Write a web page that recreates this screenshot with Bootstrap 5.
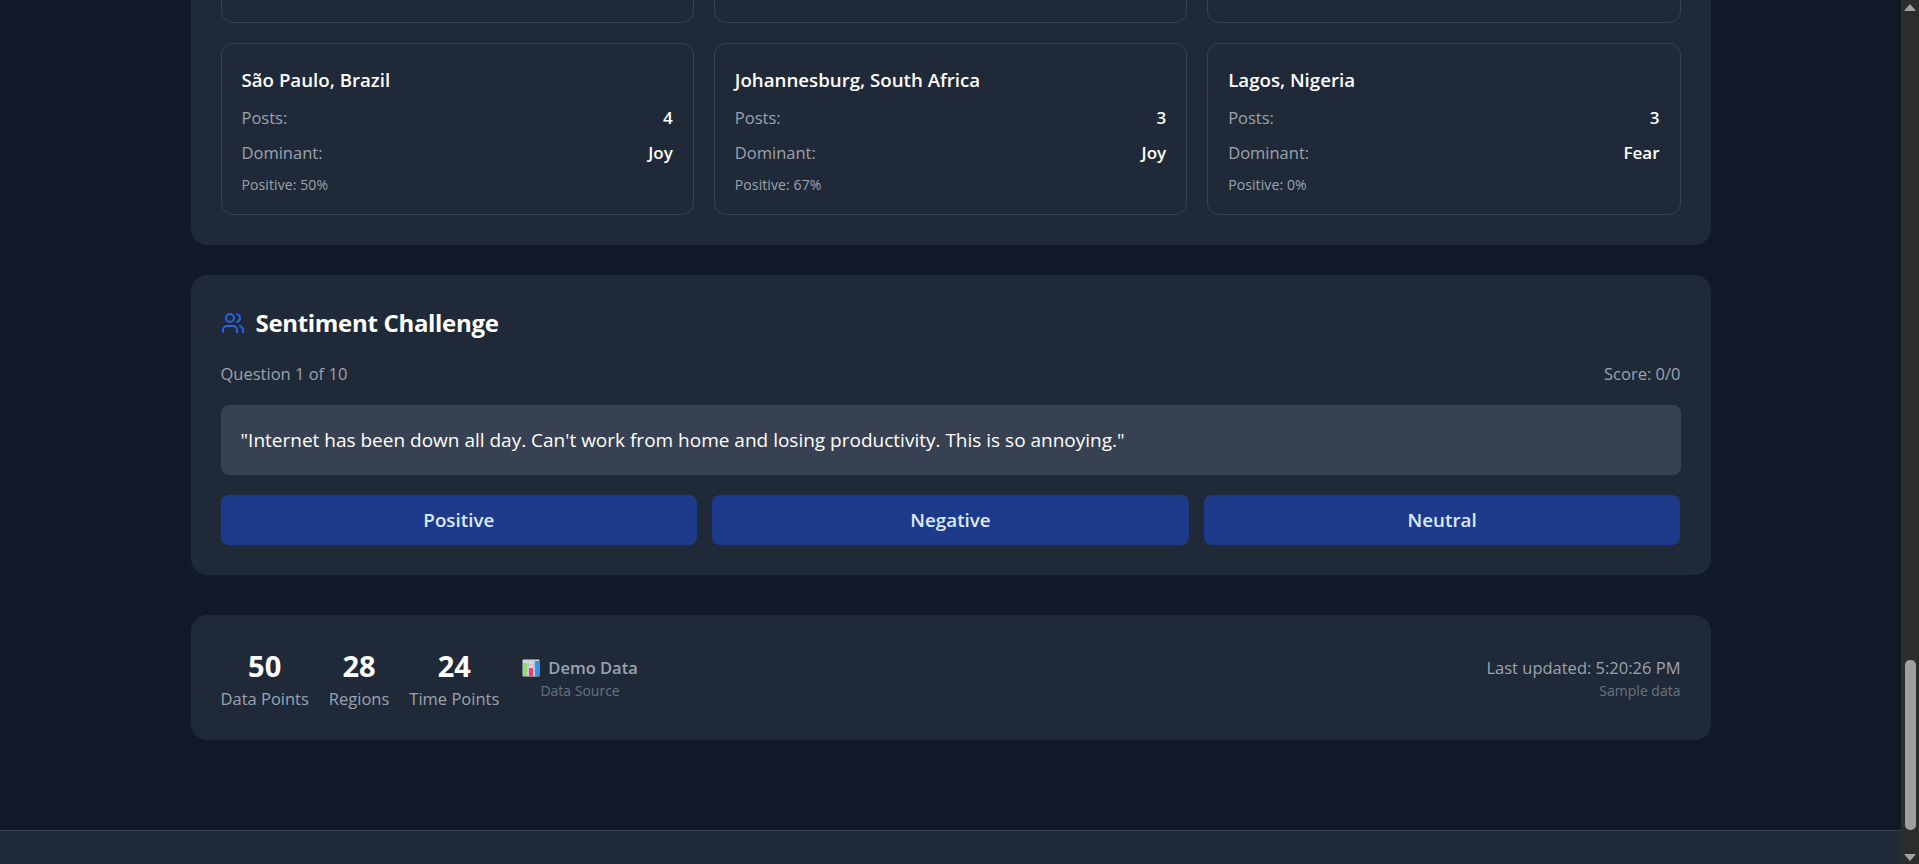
<!DOCTYPE html>
<html lang="en">
<head>
<meta charset="utf-8">
<title>Sentiment Dashboard</title>
<link href="https://cdn.jsdelivr.net/npm/bootstrap@5.3.0/dist/css/bootstrap.min.css" rel="stylesheet">
<style>
html,body{height:864px;overflow:hidden}
body{background:#111827;color:#fff;font-family:"Open Sans","Noto Sans",sans-serif;font-size:16.5px}
.view-col{width:1901px;height:864px;overflow:hidden}
.page-flow{width:1520px;margin:-179px auto 0}
.dash-panel{background:#1f2937;border-radius:16px;padding:30px}
.gap-after{margin-bottom:30px}
.gap-large{margin-bottom:40px}
.footer-panel{padding-bottom:29px}
.region-grid{display:grid;grid-template-columns:repeat(3,1fr);gap:20px}
.region-tile{border:1px solid #374151;border-radius:12px;padding:20px;height:172px}
.region-name{font-size:18.7px;font-weight:600;line-height:31px;margin-bottom:9.5px}
.region-row{line-height:25px;margin-bottom:10.5px;color:#9ca3af}
.region-row strong{color:#fff;font-weight:600;font-size:17px}
.region-pct{font-size:14px;letter-spacing:.1px;line-height:18px;color:#9ca3af}
.panel-title{font-size:24px;font-weight:700;line-height:36px;margin:0 0 21px;gap:11px;letter-spacing:-.013em}
.muted-line{color:#9ca3af;line-height:24px;margin-bottom:19px}
.quote-box{background:#374151;border-radius:8px;padding:20px;font-size:19px;line-height:30px;margin-bottom:20px}
.choice-grid{display:grid;grid-template-columns:repeat(3,1fr);gap:15px}
.choice-btn{background:#1e3a8a;color:#dbeafe;border:0;border-radius:8px;height:50px;font-size:18.8px;font-weight:600}
.choice-btn:hover{background:#1e3a8a;color:#dbeafe}
.stat-wrap{gap:20px}
.stat-num{font-size:29px;font-weight:700;line-height:41px}
.stat-label{color:#9ca3af;line-height:24px;font-size:16.5px;padding-top:1px}
.source-block{margin-left:3px}
.source-name{color:#9ca3af;font-weight:600;line-height:24px}
.source-sub{color:#6b7280;font-size:14px;line-height:21px}
.updated-line{color:#9ca3af;line-height:24px}
.bottom-strip{position:fixed;left:0;bottom:0;width:1901px;height:34px;background:#1f2937;border-top:1px solid #374151}
.fake-scroll{width:18px;height:864px;background:#2c2c2c}
.scroll-up{width:0;height:0;border-left:6px solid transparent;border-right:6px solid transparent;border-bottom:7px solid #a3a3a3;margin-top:4px}
.scroll-thumb{width:11px;height:170px;background:#9f9f9f;border-radius:5px;margin-top:649px}
.scroll-down{width:0;height:0;border-left:6px solid transparent;border-right:6px solid transparent;border-top:7px solid #a3a3a3;margin-top:24px}
</style>
</head>
<body class="d-flex">
<div class="view-col">
  <main class="page-flow">
    <section class="dash-panel gap-after">
      <div class="region-grid">
        <div class="region-tile"></div><div class="region-tile"></div><div class="region-tile"></div>
        <div class="region-tile">
          <div class="region-name">São Paulo, Brazil</div>
          <div class="region-row d-flex justify-content-between align-items-center"><span>Posts:</span><strong>4</strong></div>
          <div class="region-row d-flex justify-content-between align-items-center"><span>Dominant:</span><strong>Joy</strong></div>
          <div class="region-pct">Positive: 50%</div>
        </div>
        <div class="region-tile">
          <div class="region-name">Johannesburg, South Africa</div>
          <div class="region-row d-flex justify-content-between align-items-center"><span>Posts:</span><strong>3</strong></div>
          <div class="region-row d-flex justify-content-between align-items-center"><span>Dominant:</span><strong>Joy</strong></div>
          <div class="region-pct">Positive: 67%</div>
        </div>
        <div class="region-tile">
          <div class="region-name">Lagos, Nigeria</div>
          <div class="region-row d-flex justify-content-between align-items-center"><span>Posts:</span><strong>3</strong></div>
          <div class="region-row d-flex justify-content-between align-items-center"><span>Dominant:</span><strong>Fear</strong></div>
          <div class="region-pct">Positive: 0%</div>
        </div>
      </div>
    </section>
    <section class="dash-panel gap-large">
      <h2 class="panel-title d-flex align-items-center">
        <svg width="24" height="24" viewBox="0 0 24 24" fill="none" stroke="#2563eb" stroke-width="2" stroke-linecap="round" stroke-linejoin="round"><path d="M16 21v-2a4 4 0 0 0-4-4H6a4 4 0 0 0-4 4v2"/><circle cx="9" cy="7" r="4"/><path d="M22 21v-2a4 4 0 0 0-3-3.87"/><path d="M16 3.13a4 4 0 0 1 0 7.75"/></svg>
        <span>Sentiment Challenge</span>
      </h2>
      <div class="muted-line d-flex justify-content-between"><span>Question 1 of 10</span><span>Score: 0/0</span></div>
      <div class="quote-box">"Internet has been down all day. Can't work from home and losing productivity. This is so annoying."</div>
      <div class="choice-grid">
        <button type="button" class="btn choice-btn">Positive</button>
        <button type="button" class="btn choice-btn">Negative</button>
        <button type="button" class="btn choice-btn">Neutral</button>
      </div>
    </section>
    <section class="dash-panel footer-panel d-flex justify-content-between align-items-center">
      <div class="d-flex stat-wrap align-items-center">
        <div class="text-center"><div class="stat-num">50</div><div class="stat-label">Data Points</div></div>
        <div class="text-center"><div class="stat-num">28</div><div class="stat-label">Regions</div></div>
        <div class="text-center"><div class="stat-num">24</div><div class="stat-label">Time Points</div></div>
        <div class="text-center source-block">
          <div class="source-name d-flex align-items-center gap-2">
            <svg width="18" height="18" viewBox="0 0 18 18"><rect x="0.5" y="0.5" width="17" height="17" rx="1" fill="#d8d8e0"/><path d="M6 .5v17M12 .5v17M.5 6h17M.5 12h17" stroke="#b4b4c0" stroke-width=".7"/><rect x="1" y="4" width="4" height="13" fill="#8fdc6a"/><rect x="7" y="9" width="4" height="8" fill="#e9417a"/><rect x="13" y="2" width="4" height="15" fill="#2f95e8"/></svg>
            <span>Demo Data</span>
          </div>
          <div class="source-sub">Data Source</div>
        </div>
      </div>
      <div class="text-end">
        <div class="updated-line">Last updated: 5:20:26 PM</div>
        <div class="source-sub">Sample data</div>
      </div>
    </section>
  </main>
</div>
<aside class="fake-scroll d-flex flex-column align-items-center flex-shrink-0" aria-hidden="true">
  <div class="scroll-up"></div>
  <div class="scroll-thumb"></div>
  <div class="scroll-down"></div>
</aside>
<div class="bottom-strip"></div>
</body>
</html>
